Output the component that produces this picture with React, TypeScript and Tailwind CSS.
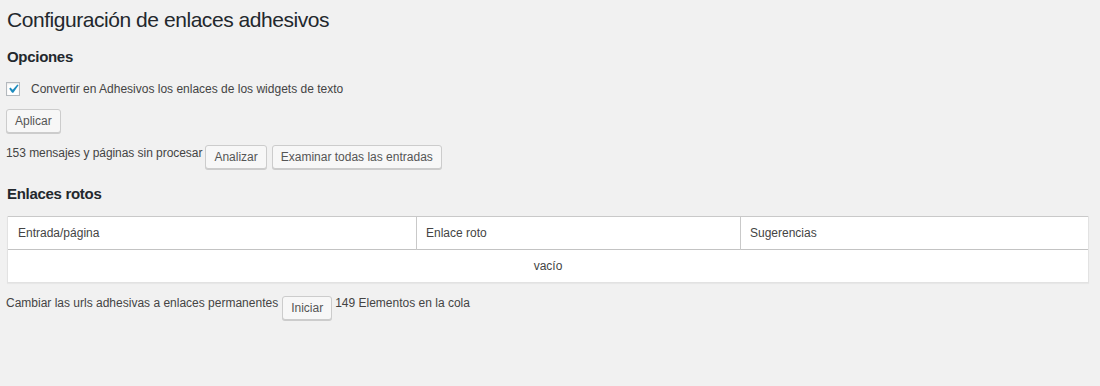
import React, { useState } from 'react';

// Botón con el estilo clásico del escritorio de WordPress
const WpButton = ({ children, className = '' }: { children: React.ReactNode; className?: string }) => (
    <button
        type="button"
        className={`h-[24px] px-[8px] bg-[#f7f7f7] border border-[#cccccc] rounded-[3px] shadow-[0_1px_0_#cccccc] text-[12px] leading-none text-[#555555] whitespace-nowrap ${className}`}
    >
        {children}
    </button>
);

function App() {
    const [widgets, setWidgets] = useState(true);

    return (
        <div className="min-h-screen bg-[#f1f1f1] pl-[6px] pr-[11px] font-['Liberation_Sans',Arial,sans-serif] text-[12px] text-[#444444]">
            <h1 className="ml-[1px] pt-[6px] text-[21px] leading-[27px] tracking-[-0.45px] text-[#23282d]">
                Configuración de enlaces adhesivos
            </h1>

            <h2 className="ml-[1px] mt-[15px] text-[15px] leading-[18px] font-bold tracking-[-0.3px] text-[#23282d]">
                Opciones
            </h2>

            <label className="mt-[16px] flex h-[14px] items-center gap-[11px] cursor-pointer" onClick={() => setWidgets(!widgets)}>
                <span className="relative flex h-[14px] w-[14px] items-center justify-center bg-white border border-[#b4b9be] shadow-[inset_0_1px_2px_rgba(0,0,0,0.1)]">
                    {widgets && (
                        <svg viewBox="0 0 20 20" className="absolute h-[18px] w-[18px] fill-[#1e8cbe]">
                            <path d="M14.83 4.89l1.34.94-5.81 8.38H9.02L5.78 9.67l1.34-1.25 2.57 2.4z" />
                        </svg>
                    )}
                </span>
                <span className="leading-[14px]">Convertir en Adhesivos los enlaces de los widgets de texto</span>
            </label>

            <div className="mt-[13px]">
                <WpButton>Aplicar</WpButton>
            </div>

            <div className="mt-[12px] flex items-start">
                <span className="leading-[16px] tracking-[-0.05px]">153 mensajes y páginas sin procesar</span>
                <WpButton className="ml-[3px]">Analizar</WpButton>
                <WpButton className="ml-[5px] px-[7px]">Examinar todas las entradas</WpButton>
            </div>

            <h2 className="ml-[1px] mt-[16px] text-[15px] leading-[18px] font-bold tracking-[-0.3px] text-[#23282d]">
                Enlaces rotos
            </h2>

            <table className="ml-[1px] mt-[13px] w-[1082px] border-collapse bg-white text-left shadow-[0_1px_1px_rgba(0,0,0,0.04)]">
                <thead>
                    <tr className="border-t border-[#c9c9c9] border-b border-b-[#c3c3c3]">
                        <th className="h-[33px] w-[409px] border-l border-[#e2e2e2] border-r border-r-[#c9c9c9] px-[10px] font-normal">
                            Entrada/página
                        </th>
                        <th className="h-[33px] w-[324px] border-r border-[#c9c9c9] px-[9px] font-normal">
                            Enlace roto
                        </th>
                        <th className="h-[33px] border-r border-[#e2e2e2] px-[9px] font-normal">
                            Sugerencias
                        </th>
                    </tr>
                </thead>
                <tbody>
                    <tr className="border-b border-[#e2e2e2]">
                        <td colSpan={3} className="h-[33px] border-x border-[#e2e2e2] text-center">
                            vacío
                        </td>
                    </tr>
                </tbody>
            </table>

            <div className="mt-[13px] flex items-start">
                <span className="leading-[14px]">Cambiar las urls adhesivas a enlaces permanentes</span>
                <WpButton className="ml-[4px]">Iniciar</WpButton>
                <span className="ml-[3px] leading-[14px]">149 Elementos en la cola</span>
            </div>
        </div>
    );
}

export default App;
